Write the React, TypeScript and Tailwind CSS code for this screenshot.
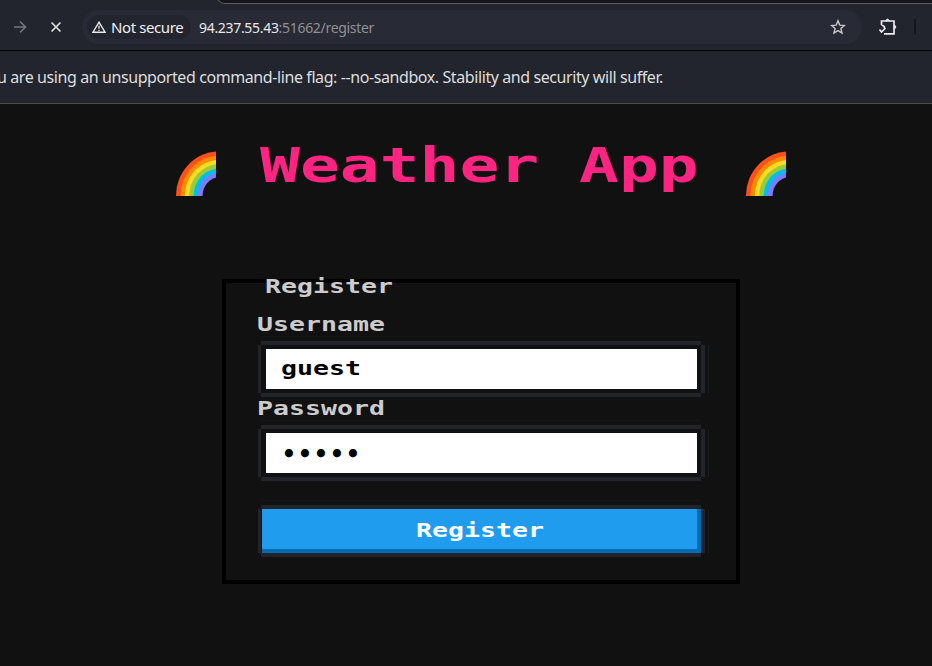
import React from "react";

const mono = "font-['DejaVu_Sans_Mono',monospace] font-bold whitespace-pre inline-block origin-left";
const ui = "font-['Noto_Sans',sans-serif]";

// Wide terminal-style lettering, 16px per character.
function Wide({ children, className = "" }: { children: string; className?: string }) {
  return (
    <span className={`block h-[22px] leading-[22px] ${className}`}>
      <span className={`${mono} scale-x-[1.384] text-[19.2px] leading-[22px]`}>{children}</span>
    </span>
  );
}

function Rainbow() {
  const bands = ["#ff4f1c", "#ff8c00", "#fddc25", "#97cc3c", "#00bdef", "#8379f8"];
  return (
    <svg width="40" height="45" viewBox="0 0 40 45" className="mt-[151px] shrink-0">
      {bands.map((c, i) => (
        <ellipse key={c} cx="44" cy="44.6" rx={44 - i * 4.4} ry={44.4 - i * 4.3} fill={c} />
      ))}
      <ellipse cx="44" cy="44.6" rx="17.4" ry="18.6" fill="#111111" />
    </svg>
  );
}

function Frame({ children, className = "" }: { children: React.ReactNode; className?: string }) {
  return (
    <div className={`w-[451px] ${className}`}>
      <div className="ml-[3px] h-px w-[440px] bg-[#151516]" />
      <div className="mt-1 ml-[3px] h-1 w-[440px] bg-[#212529]" />
      <div className="flex">
        <div className="w-[3px] bg-[#212529]" />
        <div className="w-[440px]">{children}</div>
        <div className="w-1 bg-[#212529]" />
        <div className="ml-[3px] w-px bg-[#1b1c1d]" />
      </div>
      <div className="ml-[3px] h-1 w-[440px] bg-[#212529]" />
    </div>
  );
}

function Field({ children }: { children: React.ReactNode }) {
  return (
    <div className="px-1 py-1">
      <div className="ml-px h-10 w-[431px] bg-white pt-[9px] pl-[15px] text-black">{children}</div>
    </div>
  );
}

export default function App() {
  return (
    <div className={`flex h-[666px] w-[932px] flex-col overflow-hidden bg-[#111111] ${ui}`}>
      <header className="relative h-[51px] shrink-0 border-b border-black bg-[#22252e]">
        <div className="absolute top-[-8px] left-[216px] h-3 w-[740px] rounded-bl-[9px] border-b border-l border-[#5c5c5c] bg-[#15161b]" />
        <div className="flex h-[50px] items-center pt-1">
          <svg width="14" height="14" viewBox="0 0 14 14" className="ml-[13px]" fill="none" stroke="#74767c" strokeWidth="1.6">
            <path d="M1 7H12M7 1.5L12.5 7L7 12.5" />
          </svg>
          <svg width="12" height="12" viewBox="0 0 12 12" className="ml-[23px]" fill="none" stroke="#e3e3e3" strokeWidth="1.6">
            <path d="M1.5 1.5L10.5 10.5M10.5 1.5L1.5 10.5" />
          </svg>
          <div className="ml-[20px] flex h-[34px] w-[780px] items-center rounded-full bg-[#282a35]">
            <div className="ml-[5px] flex h-[24px] w-[104px] items-center rounded-full bg-[#22252e]">
              <svg width="14" height="12" viewBox="0 0 14 12" className="ml-[5px]" fill="none" stroke="#e8e8e8" strokeWidth="1.4">
                <path d="M7 1.2L13 11.2H1Z" />
                <path d="M7 4.5V7.8M7 8.7V10" strokeWidth="1.3" />
              </svg>
              <span className="ml-[5px] text-[15px] tracking-[-0.4px] whitespace-nowrap text-[#f0f0f0]">Not secure</span>
            </div>
            <span className="ml-[8px] text-[14px] tracking-[-0.31px] whitespace-nowrap text-[#e8e8e8]">
              94.237.55.43<span className="text-[#8f9197]">:51662/register</span>
            </span>
            <svg width="16" height="16" viewBox="0 0 16 16" className="mr-[16px] ml-auto" fill="none" stroke="#c7c7c7" strokeWidth="1.4">
              <path d="M8 1.8L9.8 6.1L14.4 6.5L10.9 9.5L12 14L8 11.6L4 14L5.1 9.5L1.6 6.5L6.2 6.1Z" />
            </svg>
          </div>
          <svg width="20" height="18" viewBox="0 0 20 18" className="ml-[16px]" fill="none" stroke="#ececec" strokeWidth="1.7">
            <path d="M3.5 7V3H16V15.8H6M3.5 7Q7 8 6.5 10.5M1.5 11.5L3.5 14L7.5 10" />
            <path d="M7.5 2.5Q9.5 -0.5 11.5 2.5ZM16.5 7Q19.5 9 16.5 11Z" fill="#ececec" strokeWidth="0.8" />
          </svg>
          <div className="ml-[16px] h-4 w-[2px] bg-[#15161b]" />
        </div>
      </header>
      <div className="flex h-[53px] shrink-0 items-center justify-end border-b border-[#4b4d4e] bg-[#22252e] pr-[269px]">
        <span className="text-[16px] tracking-[-0.41px] whitespace-nowrap text-[#dedede]">
          You are using an unsupported command-line flag: --no-sandbox. Stability and security will suffer.
        </span>
      </div>
      <main className="-mt-[104px] flex h-[666px] shrink-0 flex-col">
        <div className="flex h-[279px] shrink-0 pl-[176px]">
          <Rainbow />
          <h1 className="mt-[137px] ml-[44px] h-[56px] w-[486px]">
            <span className={`${mono} scale-x-[1.38] text-[48px] leading-[56px] text-[#ff2482]`}>Weather App</span>
          </h1>
          <Rainbow />
        </div>
        <section className="ml-[222px] h-[305px] w-[518px] border-4 border-black pl-[31px] text-[#cccccc]">
          <Wide className="-mt-[7px] ml-[8px]">Register</Wide>
          <Wide className="mt-[16px]">Username</Wide>
          <Frame className="ml-[1px]">
            <Field>
              <Wide>guest</Wide>
            </Field>
          </Frame>
          <Wide className="mt-[1px]">Password</Wide>
          <Frame className="ml-[1px]">
            <Field>
              <span className="block h-[22px] pl-px font-['DejaVu_Sans_Mono',monospace] text-[23px] leading-[24px] font-bold tracking-[2.15px]">
                •••••
              </span>
            </Field>
          </Frame>
          <Frame className="mt-[19px] ml-[1px]">
            <div className="ml-px h-11 border-r-4 border-b-4 border-[#006bb3] bg-[#209cee] pt-[11px] pl-[154px] text-white">
              <Wide>Register</Wide>
            </div>
          </Frame>
        </section>
      </main>
    </div>
  );
}
